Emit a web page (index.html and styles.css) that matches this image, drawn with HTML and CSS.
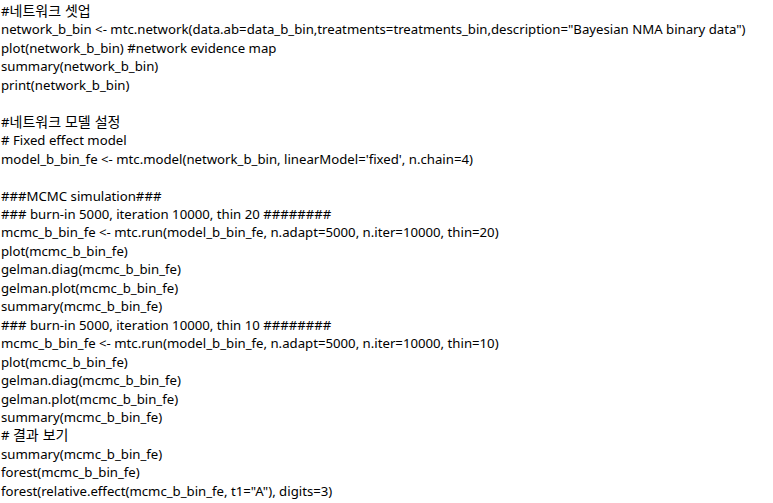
FILE: index.html
```html
<!DOCTYPE html>
<html lang="ko">
<head>
<meta charset="utf-8">
<title>R code</title>
<link rel="stylesheet" href="styles.css">
</head>
<body>
<pre class="code">#<span class="ko">네트워크 셋업</span>
network_b_bin &lt;- mtc.network(data.ab=data_b_bin,treatments=treatments_bin,description="Bayesian NMA binary data")
plot(network_b_bin) #network evidence map
summary(network_b_bin)
print(network_b_bin)

#<span class="ko">네트워크 모델 설정</span>
# Fixed effect model
model_b_bin_fe &lt;- mtc.model(network_b_bin, linearModel='fixed', n.chain=4)

###MCMC simulation###
### burn-in 5000, iteration 10000, thin 20 ########
mcmc_b_bin_fe &lt;- mtc.run(model_b_bin_fe, n.adapt=5000, n.iter=10000, thin=20)
plot(mcmc_b_bin_fe)
gelman.diag(mcmc_b_bin_fe)
gelman.plot(mcmc_b_bin_fe)
summary(mcmc_b_bin_fe)
### burn-in 5000, iteration 10000, thin 10 ########
mcmc_b_bin_fe &lt;- mtc.run(model_b_bin_fe, n.adapt=5000, n.iter=10000, thin=10)
plot(mcmc_b_bin_fe)
gelman.diag(mcmc_b_bin_fe)
gelman.plot(mcmc_b_bin_fe)
summary(mcmc_b_bin_fe)
# <span class="ko">결과 보기</span>
summary(mcmc_b_bin_fe)
forest(mcmc_b_bin_fe)
forest(relative.effect(mcmc_b_bin_fe, t1="A"), digits=3)</pre>
</body>
</html>
```

FILE: styles.css
```css
html, body {
  margin: 0;
  padding: 0;
  background: #ffffff;
}
.code {
  margin: 0;
  padding: 2px 0 0 1px;
  font-family: "Noto Sans", "Noto Sans CJK KR", sans-serif;
  font-size: 13.2px;
  line-height: 18.45px;
  color: #000000;
  white-space: pre;
}
.ko {
  font-family: "Noto Sans CJK KR", sans-serif;
  font-size: 14px;
  font-weight: 400;
  line-height: 14px;
}
```
